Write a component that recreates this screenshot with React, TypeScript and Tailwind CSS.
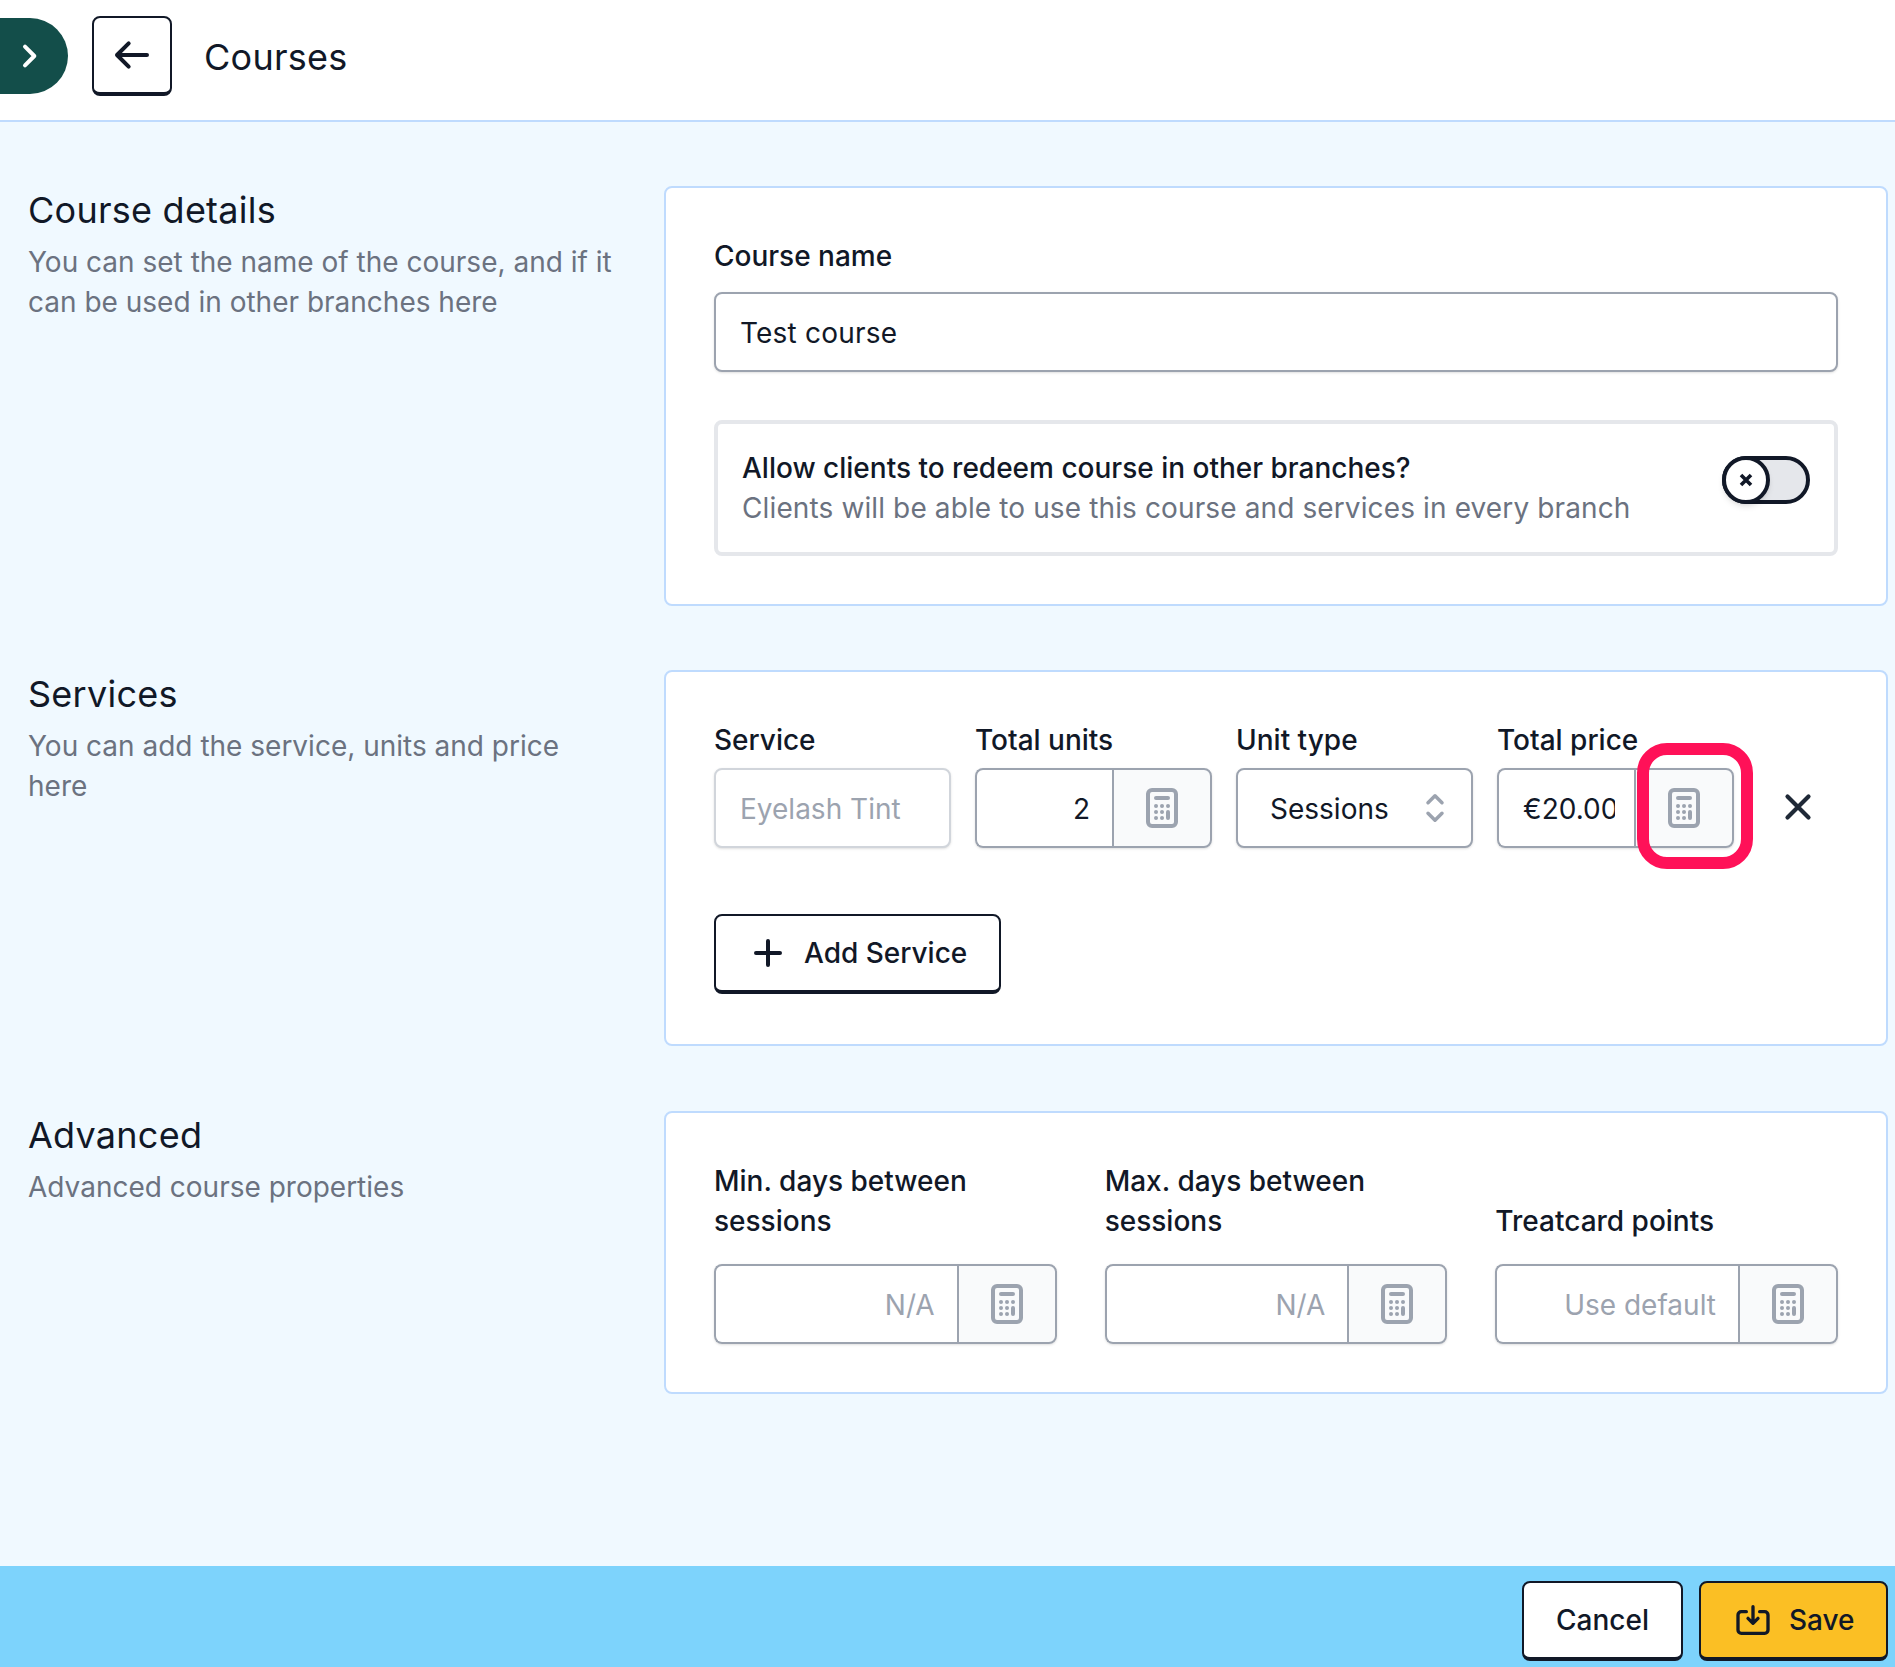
import React from "react";

function Calc() {
  return (
    <svg className="w-[48px] h-[48px] text-[#9ca3af]" fill="none" viewBox="0 0 24 24" stroke="currentColor" strokeWidth={2} strokeLinecap="round" strokeLinejoin="round">
      <path d="M9 7h6m0 10v-3m-3 3h.01M9 17h.01M9 14h.01M12 14h.01M15 11h.01M12 11h.01M9 11h.01M7 21h10a2 2 0 002-2V5a2 2 0 00-2-2H7a2 2 0 00-2 2v14a2 2 0 002 2z" />
    </svg>
  );
}

function AddonInput({ value, placeholder, tight }: { value?: string; placeholder?: string; tight?: boolean }) {
  return (
    <div className="flex h-[80px] w-full rounded-[8px] shadow-sm">
      <input
        readOnly
        defaultValue={value}
        placeholder={placeholder}
        className={`${tight ? "pr-[19px]" : "pr-[22px]"} min-w-0 flex-1 rounded-l-[8px] border-2 border-r-0 border-[#9ca3af] bg-white pt-[2px] pl-[24px] text-right text-[28px] text-[#111827] outline-none placeholder:text-[#9ca3af]`}
      />
      <div className="flex w-[100px] shrink-0 items-center justify-center rounded-r-[8px] border-2 border-[#9ca3af] bg-[#f9fafb]">
        <Calc />
      </div>
    </div>
  );
}

function Section({ title, desc, children, className = "" }: { title: string; desc: string; children: React.ReactNode; className?: string }) {
  return (
    <section className={`${className} grid grid-cols-3 gap-[48px]`}>
      <div>
        <h2 className="text-[36px] leading-[48px] font-normal tracking-[0.25px] text-[#111827]">{title}</h2>
        <p className="mt-[8px] text-[28px] leading-[40px] text-[#6b7280]">{desc}</p>
      </div>
      <div className="col-span-2 rounded-[8px] border-2 border-[#bfdbfe] bg-white p-[48px]">{children}</div>
    </section>
  );
}

function Label({ children }: { children: React.ReactNode }) {
  return <label className="block text-[28px] leading-[40px] font-medium text-[#111827]">{children}</label>;
}

export default function App() {
  return (
    <div className="flex h-screen flex-col bg-[#f0f9ff] font-['Inter',sans-serif] text-[#111827]">
      <header className="flex h-[122px] shrink-0 items-start border-b-2 border-[#bfdbfe] bg-white">
        <button className="mt-[18px] flex h-[76px] w-[68px] items-center rounded-r-full bg-[#134e4a] pl-[13px] text-white">
          <svg className="h-[32px] w-[32px]" fill="none" viewBox="0 0 24 24" stroke="currentColor" strokeWidth={3} strokeLinecap="round" strokeLinejoin="round">
            <path d="M9 5l7 7-7 7" />
          </svg>
        </button>
        <button className="mt-[16px] ml-[24px] flex h-[80px] w-[80px] items-center justify-center rounded-[8px] border-2 border-b-4 border-[#111827] bg-white">
          <svg className="h-[40px] w-[40px]" fill="none" viewBox="0 0 24 24" stroke="currentColor" strokeWidth={2.4} strokeLinecap="round" strokeLinejoin="round">
            <path d="M10 19l-7-7m0 0l7-7m-7 7h18" />
          </svg>
        </button>
        <h1 className="mt-[29px] ml-[32px] text-[36px] leading-[56px] font-normal tracking-[0.25px] text-[#111827]">Courses</h1>
      </header>

      <main className="flex flex-1 flex-col pt-[64px] pr-[7px] pl-[28px]">
        <Section title="Course details" desc="You can set the name of the course, and if it can be used in other branches here">
          <Label>Course name</Label>
          <input
            readOnly
            defaultValue="Test course"
            className="mt-[16px] block h-[80px] w-full rounded-[8px] border-2 border-[#9ca3af] bg-white px-[24px] pt-[2px] text-[28px] tracking-[0.2px] text-[#111827] shadow-sm outline-none"
          />
          <div className="mt-[48px] flex items-start justify-between rounded-[8px] border-4 border-[#e5e7eb] bg-white p-[24px]">
            <div className="text-[28px] leading-[40px]">
              <p className="font-medium text-[#111827]">Allow clients to redeem course in other branches?</p>
              <p className="tracking-[0.12px] text-[#6b7280]">Clients will be able to use this course and services in every branch</p>
            </div>
            <div className="mt-[8px] flex h-[48px] w-[88px] shrink-0 rounded-full border-4 border-[#111827] bg-[#e5e7eb]">
              <span className="-m-[4px] flex h-[48px] w-[48px] items-center justify-center rounded-full border-4 border-[#111827] bg-white shadow-md">
                <svg className="h-[16px] w-[16px] text-[#111827]" viewBox="0 0 16 16" fill="none" stroke="currentColor" strokeWidth={3.6}>
                  <path d="M3 3l10 10M13 3L3 13" />
                </svg>
              </span>
            </div>
          </div>
        </Section>

        <Section className="mt-[64px] [&>div:last-child]:pb-[50px]" title="Services" desc="You can add the service, units and price here">
          <div className="flex items-start gap-[24px]">
            <div className="w-[237px] shrink-0">
              <Label>Service</Label>
              <input
                disabled
                placeholder="Eyelash Tint"
                className="mt-[8px] block h-[80px] w-full rounded-[8px] border-2 border-[#d1d5db] bg-white px-[24px] pt-[2px] text-[28px] shadow-sm outline-none placeholder:text-[#9ca3af]"
              />
            </div>
            <div className="w-[237px] shrink-0">
              <Label>Total units</Label>
              <div className="mt-[8px]">
                <AddonInput value="2" />
              </div>
            </div>
            <div className="w-[237px] shrink-0">
              <Label>Unit type</Label>
              <div className="relative mt-[8px]">
                <select className="block h-[80px] w-full appearance-none rounded-[8px] border-2 border-[#9ca3af] bg-white pt-[2px] pl-[32px] text-[28px] text-[#111827] shadow-sm outline-none">
                  <option>Sessions</option>
                </select>
                <svg className="pointer-events-none absolute top-[19px] right-[17px] h-[42px] w-[42px] text-[#9ca3af]" fill="none" viewBox="0 0 24 24" stroke="currentColor" strokeWidth={2} strokeLinecap="round" strokeLinejoin="round">
                  <path d="M8 9l4-4 4 4m0 6l-4 4-4-4" />
                </svg>
              </div>
            </div>
            <div className="relative w-[237px] shrink-0">
              <Label>Total price</Label>
              <div className="mt-[8px]">
                <AddonInput value="€20.00" tight />
              </div>
              <div className="absolute top-[23px] left-[140px] h-[126px] w-[116px] rounded-[30px] border-[12px] border-[#ff1158]" />
            </div>
            <button className="mt-[67px] ml-[20px] flex h-[40px] w-[40px] items-center justify-center text-[#1f2937]">
              <svg className="h-[42px] w-[42px] shrink-0" fill="none" viewBox="0 0 24 24" stroke="currentColor" strokeWidth={2.4} strokeLinecap="round" strokeLinejoin="round">
                <path d="M6 18L18 6M6 6l12 12" />
              </svg>
            </button>
          </div>
          <button className="mt-[66px] flex h-[80px] items-center rounded-[8px] border-2 border-b-4 border-[#111827] bg-white pr-[32px] pl-[28px] text-[28px] font-medium text-[#111827]">
            <svg className="mr-[12px] h-[48px] w-[48px]" fill="none" viewBox="0 0 24 24" stroke="currentColor" strokeWidth={2} strokeLinecap="round" strokeLinejoin="round">
              <path d="M12 6v6m0 0v6m0-6h6m-6 0H6" />
            </svg>
            Add Service
          </button>
        </Section>

        <Section className="mt-[65px]" title="Advanced" desc="Advanced course properties">
          <div className="grid grid-cols-3 gap-[48px]">
            <div className="flex flex-col justify-between">
              <Label>Min. days between sessions</Label>
              <div className="mt-[23px]">
                <AddonInput placeholder="N/A" />
              </div>
            </div>
            <div className="flex flex-col justify-between">
              <Label>Max. days between sessions</Label>
              <div className="mt-[23px]">
                <AddonInput placeholder="N/A" />
              </div>
            </div>
            <div className="flex flex-col justify-between">
              <div className="flex flex-1 items-end">
                <Label>Treatcard points</Label>
              </div>
              <div className="mt-[23px]">
                <AddonInput placeholder="Use default" />
              </div>
            </div>
          </div>
        </Section>
      </main>

      <footer className="flex h-[101px] shrink-0 items-start justify-end gap-[16px] bg-[#7dd3fc] pt-[15px] pr-[7px]">
        <button className="h-[80px] w-[161px] rounded-[8px] border-2 border-b-4 border-[#111827] bg-white text-[28px] font-medium text-[#111827]">
          Cancel
        </button>
        <button className="flex h-[80px] w-[189px] items-center rounded-[8px] border-2 border-b-4 border-[#111827] bg-[#fbbf24] pl-[32px] text-[28px] font-medium text-[#111827]">
          <svg className="mr-[16px] h-[40px] w-[40px]" fill="none" viewBox="0 0 24 24" stroke="currentColor" strokeWidth={2} strokeLinecap="round" strokeLinejoin="round">
            <path d="M8 7H5a2 2 0 00-2 2v9a2 2 0 002 2h14a2 2 0 002-2V9a2 2 0 00-2-2h-3m-1 4l-3 3m0 0l-3-3m3 3V4" />
          </svg>
          Save
        </button>
      </footer>
    </div>
  );
}
